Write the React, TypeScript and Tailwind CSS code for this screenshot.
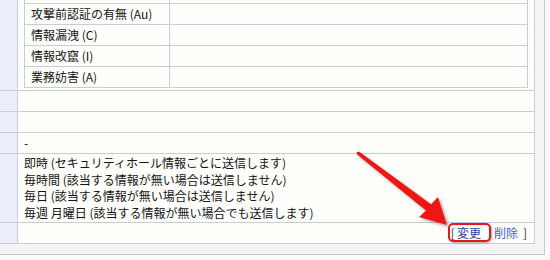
import React from "react";

const FONT = { fontFamily: '"Noto Sans CJK JP", "Noto Sans", sans-serif' };

function InnerRow({ label }: { label: string }) {
  return (
    <div className="flex h-[21px] border-x border-b border-[#c4cede]">
      <div className="flex w-[145px] items-center border-r border-[#c4cede] pl-[6px]">{label}</div>
      <div className="flex-1" />
    </div>
  );
}

function Row({ children, h = "h-[21px]", cls = "" }: { children?: React.ReactNode; h?: string; cls?: string }) {
  return (
    <div className={`flex ${h} border-b border-[#c4cede]`}>
      <div className="w-[18px] shrink-0 border-r border-[#c4cede] bg-[#e9eef9]" />
      <div className={`flex-1 bg-[#fefefb] ${cls}`}>{children}</div>
    </div>
  );
}

export default function App() {
  return (
    <div className="relative h-[260px] w-[550px] overflow-hidden bg-[#fbfbfb] text-[12px] text-[#141414]" style={FONT}>
      <div className="mt-[-17px] w-[545px] border-b border-r border-[#c9c9c9] bg-[#f4f4f4] pb-[10px] pr-[9px]">
        <div className="border-r border-[#c4cede]">
          {/* row containing inner table */}
          <div className="flex border-b border-[#c4cede]">
            <div className="w-[18px] shrink-0 border-r border-[#c4cede] bg-[#e9eef9]" />
            <div className="flex-1 bg-[#fefefb] px-[6px] pb-[2px]">
              <InnerRow label="" />
              <InnerRow label="攻撃前認証の有無 (Au)" />
              <InnerRow label="情報漏洩 (C)" />
              <InnerRow label="情報改竄 (I)" />
              <InnerRow label="業務妨害 (A)" />
            </div>
          </div>
          <Row />
          <Row />
          <Row cls="flex items-center pl-[6px]">-</Row>
          <Row h="h-[69px]" cls="pl-[6px] py-[1px] leading-[16.5px]">
            <div>即時 (セキュリティホール情報ごとに送信します)</div>
            <div>毎時間 (該当する情報が無い場合は送信しません)</div>
            <div>毎日 (該当する情報が無い場合は送信しません)</div>
            <div>毎週 月曜日 (該当する情報が無い場合でも送信します)</div>
          </Row>
          <Row cls="flex items-center justify-end pr-[7px]">
            <span className="text-[#333]">[</span>
            <span className="ml-[2px] text-[#2b3fa8]">変更</span>
            <span className="ml-[13px] text-[#3d5fd0]">削除</span>
            <span className="ml-[5px] text-[#333]">]</span>
          </Row>
        </div>
      </div>

      {/* annotation overlay */}
      <div className="pointer-events-none absolute left-[448px] top-[223px] h-[19px] w-[43px] rounded-[5px] border-2 border-[#e8141c] shadow-[1px_1px_2px_rgba(0,0,0,0.35)]" />
      <svg className="pointer-events-none absolute left-0 top-0" width="550" height="260" viewBox="0 0 550 260">
        <defs>
          <filter id="sh" x="-20%" y="-20%" width="140%" height="140%">
            <feDropShadow dx="2" dy="2" stdDeviation="1.5" floodColor="#000" floodOpacity="0.35" />
          </filter>
        </defs>
        <polygon
          points="358.9,151.6 431,204.2 438,197 447,225 419,217 426,210.6 357.1,154.4 356.6,152.6"
          fill="#f01515"
          filter="url(#sh)"
        />
      </svg>
    </div>
  );
}
